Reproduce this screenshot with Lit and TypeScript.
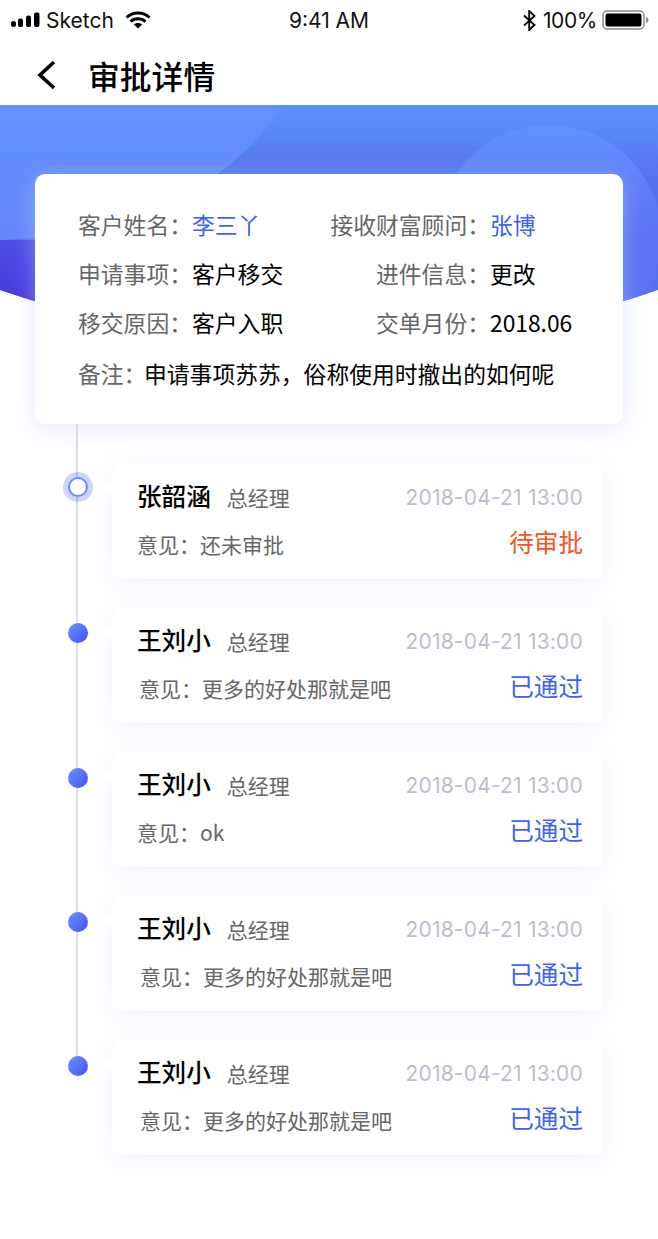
import { LitElement, html, css, svg } from 'lit';
import { customElement } from 'lit/decorators.js';

interface Step {
  name: string;
  opinion: string;
  status: string;
  pending?: boolean;
  dotTop: number;
  opinionIndent: number;
}

// full-width punctuation, the labels rely on its width
const COLON = '\uFF1A';
const COMMA = '\uFF0C';

const STEPS: Step[] = [
  { name: '张韶涵', opinion: '还未审批', status: '待审批', pending: true, dotTop: 24, opinionIndent: 0 },
  { name: '王刘小', opinion: '更多的好处那就是吧', status: '已通过', dotTop: 26, opinionIndent: 2 },
  { name: '王刘小', opinion: 'ok', status: '已通过', dotTop: 27, opinionIndent: 0 },
  { name: '王刘小', opinion: '更多的好处那就是吧', status: '已通过', dotTop: 27, opinionIndent: 3 },
  { name: '王刘小', opinion: '更多的好处那就是吧', status: '已通过', dotTop: 27, opinionIndent: 3 },
];

const heroArt = svg`
  <defs>
    <linearGradient id="base" gradientUnits="userSpaceOnUse" x1="0" y1="0" x2="0" y2="72">
      <stop offset="0" stop-color="#5c94ff" />
      <stop offset="1" stop-color="#5672ea" />
    </linearGradient>
    <linearGradient id="left" gradientUnits="userSpaceOnUse" x1="0" y1="0" x2="0" y2="135">
      <stop offset="0" stop-color="#6492ff" />
      <stop offset="1" stop-color="#6286f9" />
    </linearGradient>
    <linearGradient id="wedge" gradientUnits="userSpaceOnUse" x1="0" y1="135" x2="0" y2="200">
      <stop offset="0" stop-color="#504de6" />
      <stop offset="1" stop-color="#4538dc" />
    </linearGradient>
    <linearGradient id="circle" gradientUnits="userSpaceOnUse" x1="0" y1="20" x2="0" y2="130">
      <stop offset="0" stop-color="#6390ff" />
      <stop offset="1" stop-color="#5a72f0" />
    </linearGradient>
    <clipPath id="arc"><path d="M0 0H658V185Q329 297 0 185Z" /></clipPath>
  </defs>
  <g clip-path="url(#arc)">
    <rect width="658" height="300" fill="url(#base)" />
    <path d="M0 0H282C268 26 246 48 216 70C170 108 120 130 0 135Z" fill="url(#left)" />
    <rect y="135" width="110" height="80" fill="url(#wedge)" />
    <circle cx="549" cy="133" r="113" fill="url(#circle)" />
  </g>
`;

@customElement('app-root')
export class AppRoot extends LitElement {
  static override styles = css`
    :host {
      display: block;
      width: 658px;
      height: 1239px;
      overflow: hidden;
      background: #fff;
      font-family: 'Noto Sans CJK SC', 'Noto Sans', sans-serif;
      color: #000;
    }

    .status {
      display: flex;
      align-items: center;
      height: 40px;
      padding: 0 8px;
      font-family: Inter, 'Liberation Sans', sans-serif;
      font-size: 21px;
      color: #111;
    }

    .status-left,
    .status-right {
      flex: 1;
      display: flex;
      align-items: center;
    }

    .status-right {
      justify-content: flex-end;
    }

    .signal {
      margin-left: 3px;
    }

    .carrier {
      margin: 0 11px 0 6px;
    }

    .percent {
      margin: 0 5px 0 7px;
      letter-spacing: -0.4px;
    }

    .nav {
      display: flex;
      align-items: center;
      height: 65px;
      padding: 4px 0 0 36px;
      box-sizing: border-box;
      gap: 30px;
      font-size: 31.8px;
      font-weight: 500;
    }

    .hero {
      display: block;
      width: 658px;
      height: 200px;
    }

    .summary {
      position: relative;
      display: grid;
      grid-template-columns: 114px 184px 114px 1fr;
      grid-auto-rows: 49px;
      align-items: center;
      box-sizing: border-box;
      width: 588px;
      height: 250px;
      margin: -131px 0 0 35px;
      padding: 26px 0 0 43px;
      background: #fff;
      border-radius: 10px;
      box-shadow: 0 4px 24px rgba(196, 206, 255, 0.45);
      font-size: 22.8px;
    }

    .label {
      color: #666;
      white-space: nowrap;
    }

    .label.right {
      justify-self: end;
    }

    .link {
      color: #3d62f5;
    }

    .note {
      grid-column: 1 / -1;
      display: grid;
      grid-template-columns: 66px 1fr;
      padding-top: 3px;
      white-space: nowrap;
    }

    .timeline {
      position: relative;
      display: flex;
      flex-direction: column;
      gap: 28px;
      padding: 39px 0 0 112px;
    }

    .line {
      position: absolute;
      left: 76px;
      top: 0;
      width: 1.5px;
      height: 642px;
      background: #dadbe3;
    }

    .step {
      position: relative;
      box-sizing: border-box;
      width: 491px;
      height: 116px;
      padding: 15px 20px 0 25px;
      background: #fff;
      border-radius: 10px;
      box-shadow: 0 4px 24px rgba(84, 104, 240, 0.09);
    }

    .step::before {
      content: '';
      position: absolute;
      left: -14px;
      top: 16px;
      width: 14px;
      height: 18px;
      background: #fff;
      clip-path: polygon(100% 0, 0 50%, 100% 100%);
    }

    .dot {
      position: absolute;
      left: -44px;
      width: 20px;
      height: 20px;
      margin-top: -10px;
      border-radius: 50%;
      box-sizing: border-box;
      background: linear-gradient(135deg, #6f93ff, #3c52fb);
    }

    .dot.current {
      background: #fff;
      border: 2px solid #6d8bff;
      box-shadow: 0 0 0 5px rgba(88, 116, 245, 0.3);
    }

    .top,
    .bottom {
      display: flex;
      align-items: center;
      justify-content: space-between;
    }

    .top {
      height: 33px;
    }

    .bottom {
      height: 33px;
      margin-top: 16px;
    }

    .who {
      display: flex;
      align-items: center;
      gap: 16px;
    }

    .name {
      font-size: 24.6px;
      font-weight: 500;
    }

    .role {
      font-size: 21px;
      color: #666;
      padding-top: 4px;
    }

    .time {
      font-family: Inter, 'Noto Sans', sans-serif;
      font-size: 21px;
      letter-spacing: 0.2px;
      color: #b9bfcd;
      padding-top: 5px;
    }

    .opinion {
      font-size: 21px;
      color: #666;
    }

    .state {
      font-size: 24.6px;
      color: #3d62f5;
      padding-bottom: 5px;
    }

    .state.pending {
      color: #f5541c;
    }
  `;

  private _row(label: string, value: string, right: boolean, link = false) {
    return html`
      <span class="label ${right ? 'right' : ''}">${label}${COLON}</span>
      <span class=${link ? 'link' : ''}>${value}</span>
    `;
  }

  private _step(s: Step) {
    return html`
      <div class="step">
        <div class="dot ${s.pending ? 'current' : ''}" style="top:${s.dotTop}px"></div>
        <div class="top">
          <div class="who">
            <span class="name">${s.name}</span>
            <span class="role">总经理</span>
          </div>
          <span class="time">2018-04-21 13:00</span>
        </div>
        <div class="bottom">
          <span class="opinion" style="margin-left:${s.opinionIndent}px">意见${COLON}${s.opinion}</span>
          <span class="state ${s.pending ? 'pending' : ''}">${s.status}</span>
        </div>
      </div>
    `;
  }

  protected override render() {
    return html`
      <div class="status">
        <div class="status-left">
          <svg class="signal" width="29" height="16" viewBox="0 0 29 16" fill="#000">
            <rect x="0" y="9" width="5" height="6" rx="2.500" />
            <rect x="7" y="6.500" width="5" height="8.500" rx="2" />
            <rect x="15" y="3.500" width="5" height="11.500" rx="2" />
            <rect x="23" y="0.500" width="5.500" height="14.500" rx="2" />
          </svg>
          <span class="carrier">Sketch</span>
          <svg width="26" height="18" viewBox="0 0 26 18" fill="none" stroke="#000" stroke-width="3">
            <path d="M1.500 6.500C8 .6 18 .6 24.500 6.500" />
            <path d="M5.500 10.600C9.800 6.800 16.200 6.800 20.500 10.600" />
            <path d="M13 17.500 8.800 13.600C11.200 11.600 14.800 11.600 17.200 13.600Z" fill="#000" stroke="none" />
          </svg>
        </div>
        <span>9:41 AM</span>
        <div class="status-right">
          <svg width="13" height="21" viewBox="0 0 13 21" fill="none" stroke="#000" stroke-width="1.800">
            <path d="M1 5.500 11.500 15 6.200 20V1L11.500 6 1 15.500" />
          </svg>
          <span class="percent">100%</span>
          <svg width="48" height="20" viewBox="0 0 48 20">
            <rect x="1" y="1" width="41" height="18" rx="4" fill="none" stroke="#8c8c8c" stroke-width="1.500" />
            <rect x="3.500" y="3.500" width="36" height="13" rx="2" fill="#000" />
            <path d="M44 7c1.500.3 2.500 1.500 2.500 3s-1 2.700-2.500 3z" fill="#8c8c8c" />
          </svg>
        </div>
      </div>

      <div class="nav">
        <svg width="22" height="32" viewBox="0 0 22 32" fill="none" stroke="#000" stroke-width="3.600">
          <path d="M18 3 4 16l14 13" />
        </svg>
        <span>审批详情</span>
      </div>

      <svg class="hero" viewBox="0 0 658 200">${heroArt}</svg>

      <div class="summary">
        ${this._row('客户姓名', '李三丫', false, true)}
        ${this._row('接收财富顾问', '张博', true, true)}
        ${this._row('申请事项', '客户移交', false)}
        ${this._row('进件信息', '更改', true)}
        ${this._row('移交原因', '客户入职', false)}
        ${this._row('交单月份', '2018.06', true)}
        <div class="note">
          <span class="label">备注${COLON}</span>
          <span>申请事项苏苏${COMMA}俗称使用时撤出的如何呢</span>
        </div>
      </div>

      <div class="timeline">
        <div class="line"></div>
        ${STEPS.map((s) => this._step(s))}
      </div>
    `;
  }
}

declare global {
  interface HTMLElementTagNameMap {
    'app-root': AppRoot;
  }
}
